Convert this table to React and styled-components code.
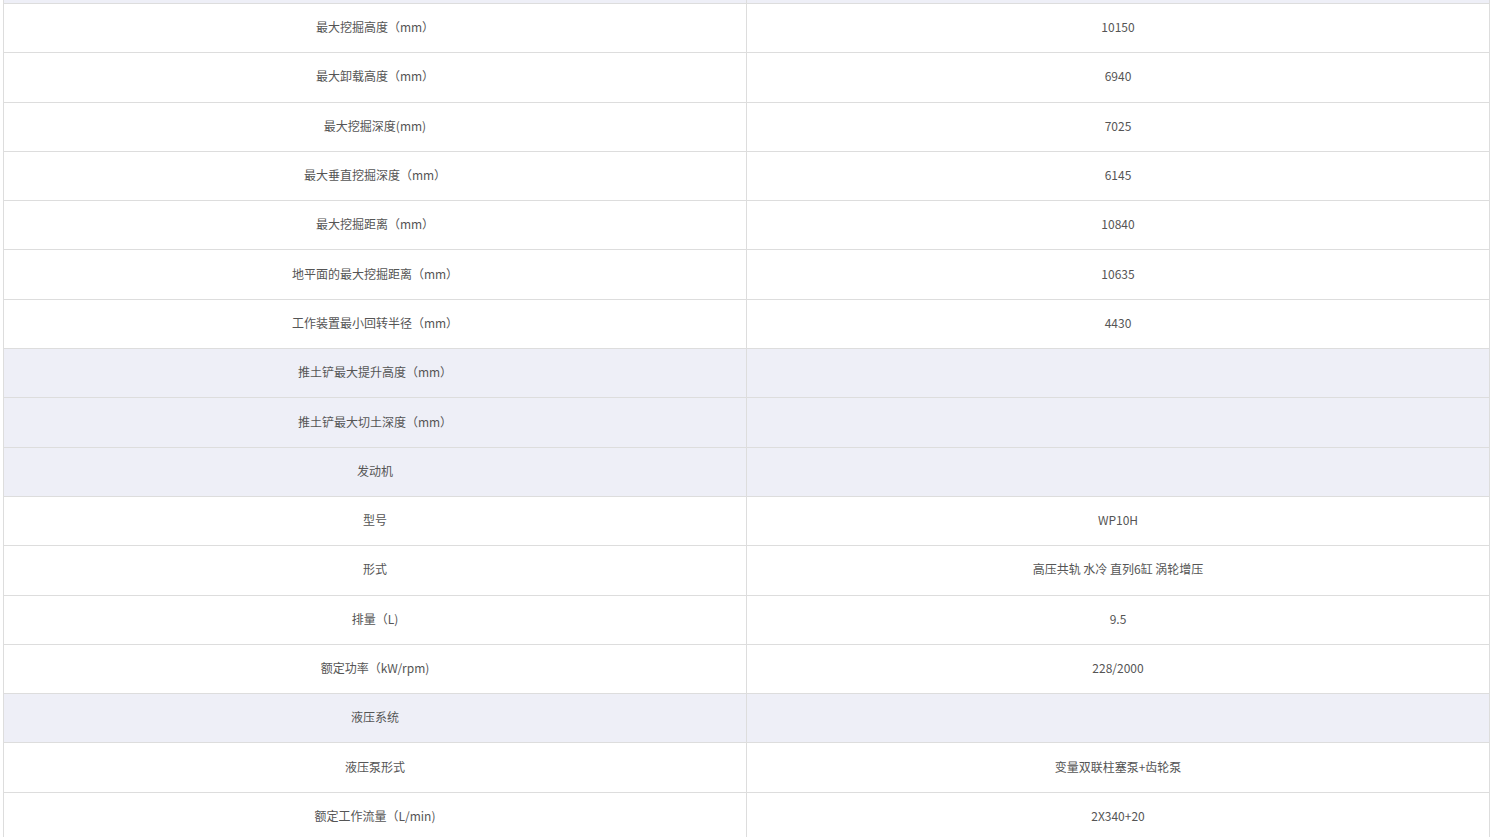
import React from "react";
import styled, { createGlobalStyle } from "styled-components";

const rows = [
  { name: "", value: "", shaded: true },
  { name: "最大挖掘高度（mm）", value: "10150" },
  { name: "最大卸载高度（mm）", value: "6940" },
  { name: "最大挖掘深度(mm)", value: "7025" },
  { name: "最大垂直挖掘深度（mm）", value: "6145" },
  { name: "最大挖掘距离（mm）", value: "10840" },
  { name: "地平面的最大挖掘距离（mm）", value: "10635" },
  { name: "工作装置最小回转半径（mm）", value: "4430" },
  { name: "推土铲最大提升高度（mm）", value: "", shaded: true },
  { name: "推土铲最大切土深度（mm）", value: "", shaded: true },
  { name: "发动机", value: "", shaded: true },
  { name: "型号", value: "WP10H" },
  { name: "形式", value: "高压共轨 水冷 直列6缸 涡轮增压" },
  { name: "排量（L)", value: "9.5" },
  { name: "额定功率（kW/rpm)", value: "228/2000" },
  { name: "液压系统", value: "", shaded: true },
  { name: "液压泵形式", value: "变量双联柱塞泵+齿轮泵" },
  { name: "额定工作流量（L/min)", value: "2X340+20" },
];

const GlobalStyle = createGlobalStyle`
  html, body {
    margin: 0;
    padding: 0;
    background: #fff;
    overflow: hidden;
  }
  body {
    font-family: "Microsoft YaHei", "Noto Sans CJK SC", "Noto Sans", sans-serif;
  }
`;

const Page = styled.div`
  width: 1496px;
  height: 837px;
  overflow: hidden;
  padding-left: 3px;
  box-sizing: border-box;
`;

const Table = styled.table`
  width: 1487px;
  margin-top: -46.3px;
  border-collapse: collapse;
  table-layout: fixed;
`;

const Row = styled.tr`
  height: 49.3px;
  background: ${(p) => (p.$shaded ? "#eeeff7" : "#fff")};
`;

const Cell = styled.td`
  border: 1px solid #dddddd;
  padding: 0 0 2px;
  text-align: center;
  vertical-align: middle;
  font-size: 12px;
  color: #555;
  line-height: 18px;
`;

export default function App() {
  return (
    <Page>
      <GlobalStyle />
      <Table>
        <colgroup>
          <col style={{ width: "743px" }} />
          <col />
        </colgroup>
        <tbody>
          {rows.map((r, i) => (
            <Row key={i} $shaded={r.shaded}>
              <Cell>{r.name}</Cell>
              <Cell>{r.value}</Cell>
            </Row>
          ))}
        </tbody>
      </Table>
    </Page>
  );
}
